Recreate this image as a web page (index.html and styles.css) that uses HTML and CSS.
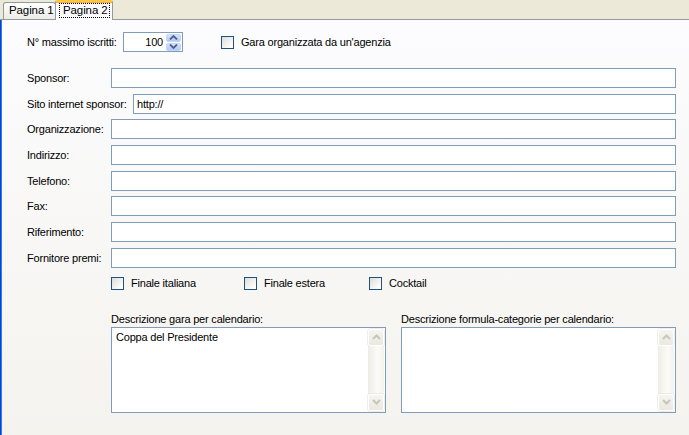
FILE: index.html
```html
<!DOCTYPE html>
<html lang="it">
<head>
<meta charset="utf-8">
<title>Gara</title>
<link rel="stylesheet" href="styles.css">
</head>
<body>
<div class="window">
  <div class="tabstrip">
    <div class="tab">Pagina 1</div>
    <div class="tab tab-active"><span class="focus">Pagina 2</span></div>
  </div>
  <div class="page">
    <div class="top-row">
      <span class="lbl lbl-num">N° massimo iscritti:</span>
      <div class="spin">
        <span class="spin-val">100</span>
        <div class="spin-btns">
          <div class="spin-btn"><svg width="9" height="5" viewBox="0 0 9 5"><polyline points="1,4.5 4.5,1 8,4.5" fill="none" stroke="#4D6185" stroke-width="1.8"/></svg></div>
          <div class="spin-btn"><svg width="9" height="5" viewBox="0 0 9 5"><polyline points="1,0.5 4.5,4 8,0.5" fill="none" stroke="#4D6185" stroke-width="1.8"/></svg></div>
        </div>
      </div>
      <div class="check check-agency"><span class="box"></span><span>Gara organizzata da un'agenzia</span></div>
    </div>

    <div class="fields">
      <div class="field"><span class="lbl">Sponsor:</span><div class="input"></div></div>
      <div class="field"><span class="lbl lbl-wide">Sito internet sponsor:</span><div class="input">http://</div></div>
      <div class="field"><span class="lbl">Organizzazione:</span><div class="input"></div></div>
      <div class="field"><span class="lbl">Indirizzo:</span><div class="input"></div></div>
      <div class="field"><span class="lbl">Telefono:</span><div class="input"></div></div>
      <div class="field"><span class="lbl">Fax:</span><div class="input"></div></div>
      <div class="field"><span class="lbl">Riferimento:</span><div class="input"></div></div>
      <div class="field"><span class="lbl">Fornitore premi:</span><div class="input"></div></div>
    </div>

    <div class="checks">
      <div class="check check-1"><span class="box"></span><span>Finale italiana</span></div>
      <div class="check check-2"><span class="box"></span><span>Finale estera</span></div>
      <div class="check"><span class="box"></span><span>Cocktail</span></div>
    </div>

    <div class="descs">
      <div class="desc">
        <div class="desc-label">Descrizione gara per calendario:</div>
        <div class="memo">
          <div class="memo-text">Coppa del Presidente</div>
          <div class="vscroll">
            <div class="sb-btn"><svg width="9" height="6" viewBox="0 0 9 6"><polyline points="1,5 4.5,1.5 8,5" fill="none" stroke="#C8C6BA" stroke-width="2"/></svg></div>
            <div class="sb-track"></div>
            <div class="sb-btn"><svg width="9" height="6" viewBox="0 0 9 6"><polyline points="1,1 4.5,4.5 8,1" fill="none" stroke="#C8C6BA" stroke-width="2"/></svg></div>
          </div>
        </div>
      </div>
      <div class="desc">
        <div class="desc-label">Descrizione formula-categorie per calendario:</div>
        <div class="memo">
          <div class="memo-text"></div>
          <div class="vscroll">
            <div class="sb-btn"><svg width="9" height="6" viewBox="0 0 9 6"><polyline points="1,5 4.5,1.5 8,5" fill="none" stroke="#C8C6BA" stroke-width="2"/></svg></div>
            <div class="sb-track"></div>
            <div class="sb-btn"><svg width="9" height="6" viewBox="0 0 9 6"><polyline points="1,1 4.5,4.5 8,1" fill="none" stroke="#C8C6BA" stroke-width="2"/></svg></div>
          </div>
        </div>
      </div>
    </div>
  </div>
</div>
</body>
</html>
```

FILE: styles.css
```css
* { box-sizing: border-box; }

html, body {
  margin: 0;
  padding: 0;
  width: 689px;
  height: 435px;
  overflow: hidden;
}

body {
  font-family: "Liberation Sans", Arial, sans-serif;
  font-size: 11px;
  letter-spacing: -0.2px;
  color: #000;
  background: #ECE9D8;
}

.window {
  display: flex;
  flex-direction: column;
  height: 435px;
}

/* ---------- tabs ---------- */
.tabstrip {
  height: 20px;
  display: flex;
  align-items: flex-end;
  background: #ECE9D8;
  border-bottom: 1px solid #919B9C;
  padding-left: 3px;
}

.tab {
  width: 53px;
  height: 17px;
  border: 1px solid #919B9C;
  border-bottom: none;
  border-radius: 3px 3px 0 0;
  background: linear-gradient(to bottom, #FFFFFF, #ECEBE6);
  font-size: 11.5px;
  letter-spacing: -0.1px;
  line-height: 15px;
  padding-left: 5px;
  white-space: nowrap;
}

.tab-active {
  width: 58px;
  height: 20px;
  margin-left: -1px;
  margin-bottom: -1px;
  border-top: 2px solid #FFC83C;
  border-radius: 2px 2px 0 0;
  background: #FCFCFE;
  padding: 1px 2px 0 3px;
  box-shadow: inset 0 1px 0 #F7A84A;
}

.focus {
  display: block;
  height: 15px;
  border: 1px dotted #000;
  line-height: 13px;
  padding-left: 3px;
}

/* ---------- page ---------- */
.page {
  flex: 1;
  background: linear-gradient(to bottom, #FCFCFE, #F4F3EE);
  border-left: 1px solid #0046D5;
  box-shadow: inset 1px 0 0 #3D7BEA;
  padding: 0 13px 0 26px;
}

.lbl {
  width: 84px;
  flex: none;
  white-space: nowrap;
}

.lbl-num { width: 96px; }
.lbl-wide { width: 106px; }

.top-row {
  margin-top: 12px;
  height: 20px;
  display: flex;
  align-items: center;
}

.spin {
  width: 60px;
  height: 20px;
  border: 1px solid #7F9DB9;
  background: #FFFFFF;
  display: flex;
  align-items: center;
  padding: 1px 1px 1px 0;
}

.spin-val {
  flex: 1;
  text-align: right;
  padding-right: 3px;
}

.spin-btns {
  width: 15px;
  height: 17px;
  display: flex;
  flex-direction: column;
  gap: 1px;
}

.spin-btn {
  flex: 1;
  background: linear-gradient(to bottom, #D7E3FC, #B3C8F5);
  border: 1px solid #C2D3FC;
  border-radius: 2px;
  display: flex;
  align-items: center;
  justify-content: center;
}

.check {
  display: flex;
  align-items: center;
  gap: 7px;
  white-space: nowrap;
}

.check-agency { margin-left: 38px; gap: 7px; }

.box {
  width: 13px;
  height: 13px;
  flex: none;
  border: 1px solid #1C5180;
  background: linear-gradient(135deg, #DCDCD7, #FFFFFF 85%);
}

/* ---------- fields ---------- */
.fields {
  margin-top: 16px;
  display: flex;
  flex-direction: column;
  gap: 5.7px;
}

.field {
  display: flex;
  align-items: center;
  height: 20px;
}

.input {
  flex: 1;
  height: 20px;
  border: 1px solid #7F9DB9;
  background: #FFFFFF;
  padding: 0 3px;
  line-height: 18px;
}

/* ---------- checks ---------- */
.checks {
  margin-top: 9px;
  padding-left: 84px;
  display: flex;
  height: 13px;
}

.check-1 { width: 133px; }
.check-2 { width: 125px; }

/* ---------- descriptions ---------- */
.descs {
  margin-top: 23px;
  padding-left: 84px;
  display: flex;
  gap: 15px;
}

.desc {
  width: 275px;
}

.desc-label {
  height: 14px;
  line-height: 13px;
  white-space: nowrap;
}

.memo {
  height: 86px;
  border: 1px solid #7F9DB9;
  background: #FFFFFF;
  display: flex;
}

.memo-text {
  flex: 1;
  padding: 3px 4px;
  line-height: 13px;
}

.vscroll {
  width: 17px;
  display: flex;
  flex-direction: column;
  padding: 1px 1px 1px 0;
}

.sb-btn {
  height: 17px;
  flex: none;
  background: linear-gradient(to bottom, #F6F5EF, #EAE8DF);
  border: 1px solid #FFFFFF;
  box-shadow: 0 0 0 0.5px #E0DED4;
  border-radius: 2px;
  display: flex;
  align-items: center;
  justify-content: center;
}

.sb-track {
  flex: 1;
  background: linear-gradient(to right, #EEEDE5, #FBFBF8 60%, #F3F2EC);
}
```
